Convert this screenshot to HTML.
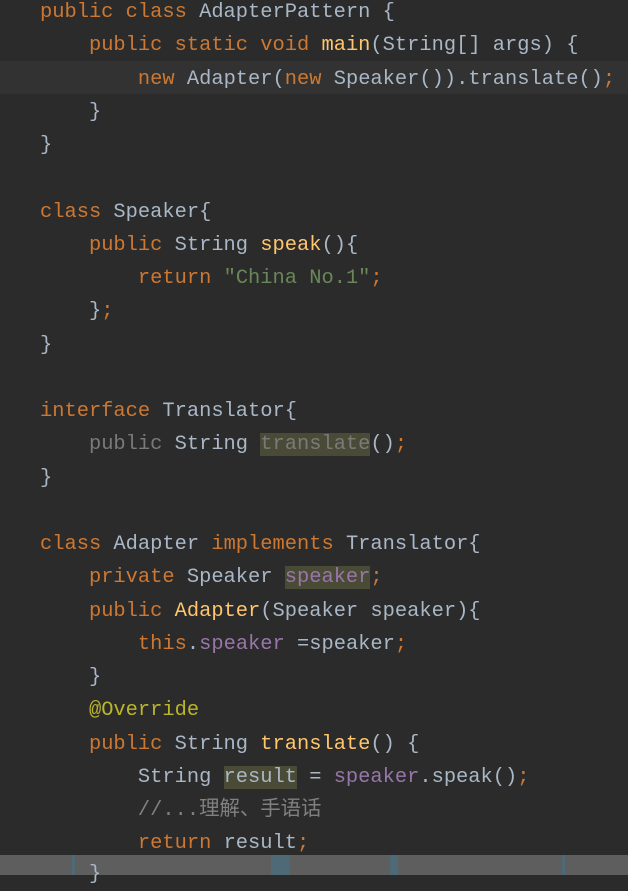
<!DOCTYPE html><html><head><style>
body{margin:0;width:628px;height:891px;background:#2b2b2b;overflow:hidden;position:relative}
pre{margin:0;position:absolute;left:40px;top:-4px;font-family:"Liberation Mono","Noto Sans CJK SC",monospace;font-size:20.4px;line-height:33.25px;color:#a9b7c6}
.k{color:#cc7832}.f{color:#ffc66d}.s{color:#6a8759}.p{color:#9876aa}.a{color:#bbb529}.c{color:#808080}.g{color:#7a7a7a}
.h{background:#4a4b36}
.cur{position:absolute;left:0;top:61px;width:628px;height:33px;background:#323232}
.band{position:absolute;left:0;top:855px;width:628px;height:20px;background:#5e5e5e}
.b{position:absolute;top:855px;height:20px;background:#4e6a76}
</style></head><body>
<div class="cur"></div>
<pre><span class="k">public class</span> AdapterPattern {
    <span class="k">public static void</span> <span class="f">main</span>(String[] args) {
        <span class="k">new</span> Adapter(<span class="k">new</span> Speaker()).translate()<span class="k">;</span>
    }
}

<span class="k">class</span> Speaker{
    <span class="k">public</span> String <span class="f">speak</span>(){
        <span class="k">return</span> <span class="s">"China No.1"</span><span class="k">;</span>
    }<span class="k">;</span>
}

<span class="k">interface</span> Translator{
    <span class="g">public</span> String <span class="h g">translate</span>()<span class="k">;</span>
}

<span class="k">class</span> Adapter <span class="k">implements</span> Translator{
    <span class="k">private</span> Speaker <span class="h p">speaker</span><span class="k">;</span>
    <span class="k">public</span> <span class="f">Adapter</span>(Speaker speaker){
        <span class="k">this</span>.<span class="p">speaker</span> =speaker<span class="k">;</span>
    }
    <span class="a">@Override</span>
    <span class="k">public</span> String <span class="f">translate</span>() {
        String <span class="h">result</span> = <span class="p">speaker</span>.speak()<span class="k">;</span>
        <span class="c">//...理解、手语话</span>
        <span class="k">return</span> result<span class="k">;</span>
</pre>
<div class="band"></div>
<div class="b" style="left:72px;width:3px"></div>
<div class="b" style="left:271px;width:19px"></div>
<div class="b" style="left:390px;width:8px"></div>
<div class="b" style="left:562px;width:3px"></div>
<pre style="top:858px;left:89px;color:#a9b7c6">}</pre>
</body></html>
